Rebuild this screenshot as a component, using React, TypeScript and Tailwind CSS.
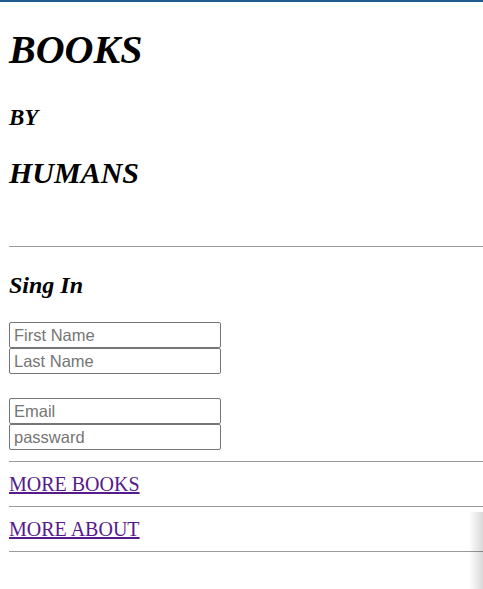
export default function App() {
  const serif = { fontFamily: '"Liberation Serif", "Times New Roman", serif' };
  const sans = { fontFamily: '"Liberation Sans", Arial, sans-serif' };

  const inputCls =
    'block w-[212px] h-[26px] border border-[#767676] rounded-[2px] pl-[4px] text-[16.5px] text-black placeholder:text-[#757575] bg-white outline-none';

  return (
    <div className="relative min-h-[589px] overflow-hidden bg-white border-t-2 border-[#1f5b8e]" style={serif}>
      <div className="flex flex-col pl-[9px]">
        <h1 className="mt-[28px] text-[40px] leading-[40px] font-bold italic">BOOKS</h1>
        <h3 className="mt-[36px] text-[23px] leading-[23px] font-bold italic">BY</h3>
        <h2 className="mt-[29px] text-[30px] leading-[30px] font-bold italic">HUMANS</h2>

        <div className="mt-[58px] h-px bg-[#9a9a9a]" />

        <h2 className="mt-[26px] text-[24px] leading-[24px] font-bold italic">Sing In</h2>

        <form className="mt-[25px] flex flex-col" style={sans}>
          <input className={inputCls} placeholder="First Name" />
          <input className={inputCls} placeholder="Last Name" />
          <input className={`${inputCls} mt-[24px]`} placeholder="Email" />
          <input className={inputCls} type="password" placeholder="passward" />
        </form>

        <div className="mt-[11px] h-px bg-[#9a9a9a]" />
        <a href="#" className="mt-[12px] self-start text-[20px] leading-[20px] text-[#551a8b] underline">
          MORE BOOKS
        </a>
        <div className="mt-[12px] h-px bg-[#9a9a9a]" />
        <a href="#" className="mt-[12px] self-start text-[20px] leading-[20px] text-[#551a8b] underline">
          MORE ABOUT
        </a>
        <div className="mt-[12px] h-px bg-[#9a9a9a]" />
      </div>

      <div className="absolute right-0 top-[510px] bottom-0 w-[14px] bg-linear-to-r from-transparent to-black/15" />
    </div>
  );
}
